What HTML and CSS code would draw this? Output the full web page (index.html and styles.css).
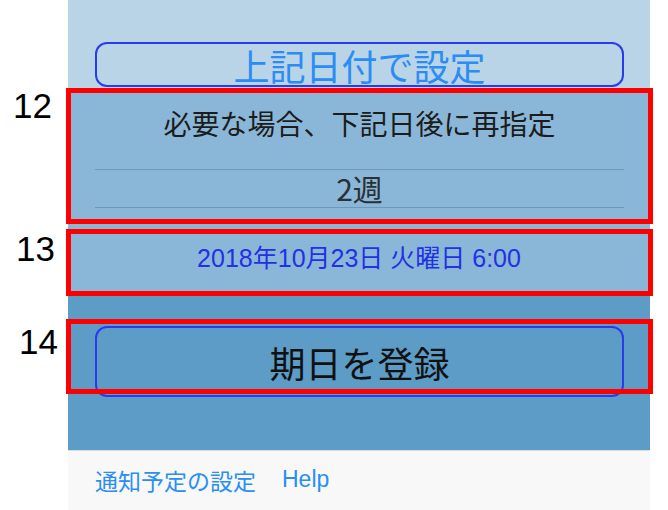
FILE: index.html
```html
<!DOCTYPE html>
<html lang="ja">
<head>
  <meta charset="UTF-8" />
  <meta name="viewport" content="width=device-width, initial-scale=1.0" />
  <title>期日の設定</title>
  <link rel="stylesheet" href="styles.css">
</head>

<body>
  <div class="phone">
    <div class="top">
      <button class="btn btn-set">上記日付で設定</button>
    </div>

    <div class="mid">
      <section class="block block-repeat">
        <span class="tag tag-12">12</span>
        <span class="frame"></span>
        <p class="note">必要な場合、下記日後に再指定</p>
        <div class="picker">
          <div class="picker-row">2週</div>
        </div>
      </section>

      <section class="block block-date">
        <span class="tag tag-13">13</span>
        <span class="frame"></span>
        <p class="date">2018年10月23日 火曜日 6:00</p>
      </section>
    </div>

    <div class="bottom">
      <section class="block block-save">
        <span class="tag tag-14">14</span>
        <span class="frame"></span>
        <button class="btn btn-save">期日を登録</button>
      </section>
    </div>

    <footer>
      <a href="#">通知予定の設定</a>
      <a href="#">Help</a>
    </footer>
  </div>
</body>
</html>
```

FILE: styles.css
```css
body {
  font-family: "Noto Sans CJK JP", sans-serif;
  background: white;
  margin: 0;
  padding: 0;
}

.phone {
  width: 582px;
  margin-left: 68px;
}

.top {
  background: #b9d4e7;
  height: 88px;
  padding: 42px 26px 0 27px;
  box-sizing: border-box;
}

.btn {
  display: block;
  width: 100%;
  background: transparent;
  border: 2px solid #2a3af0;
  border-radius: 12px;
  font-family: "Noto Sans CJK JP", sans-serif;
  padding: 0;
  cursor: pointer;
}

.btn-set {
  height: 45px;
  color: #2a8cf4;
  font-size: 36px;
  line-height: 38px;
}

.mid {
  background: #8ab7d7;
}

.block {
  position: relative;
  box-sizing: border-box;
}

.frame {
  position: absolute;
  top: 0;
  bottom: 0;
  left: -2px;
  right: -3px;
  border: 5px solid #ff0000;
  pointer-events: none;
}

.tag {
  position: absolute;
  font-family: "Liberation Sans", sans-serif;
  font-size: 35px;
  line-height: 1;
  color: black;
}

.tag-12 { left: -55px; top: 0; }
.tag-13 { left: -52px; top: 2px; }
.tag-14 { left: -49px; top: 5px; }

.block-repeat {
  height: 136px;
  padding: 17px 26px 0 27px;
}

.note {
  margin: 0;
  text-align: center;
  font-size: 28px;
  line-height: 36px;
  color: #1c1c1c;
}

.picker {
  margin-top: 28px;
  border-top: 1px solid #6f97b8;
  border-bottom: 1px solid #6f97b8;
}

.picker-row {
  height: 37px;
  text-align: center;
  font-size: 30px;
  line-height: 37px;
  color: #2b3036;
}

.block-date {
  margin-top: 5px;
  height: 67px;
  padding-top: 10px;
}

.date {
  margin: 0;
  text-align: center;
  font-family: "Liberation Sans", "Noto Sans CJK JP", sans-serif;
  font-size: 25px;
  line-height: 38px;
  color: #2230e6;
}

.bottom {
  background: #5c9cc7;
  height: 154px;
  padding-top: 23px;
  box-sizing: border-box;
}

.block-save {
  height: 75px;
  padding: 7px 26px 0 27px;
}

.btn-save {
  height: 71px;
  color: #111;
  font-size: 36px;
  line-height: 40px;
}

footer {
  height: 60px;
  background: #f8f8f8;
  border-top: 1px solid #d5dde5;
  box-sizing: border-box;
  padding: 0 0 2px 27px;
  display: flex;
  align-items: center;
  gap: 26px;
}

footer a {
  color: #2a8ef2;
  text-decoration: none;
  font-family: "Liberation Sans", "Noto Sans CJK JP", sans-serif;
  font-size: 23px;
}
```
